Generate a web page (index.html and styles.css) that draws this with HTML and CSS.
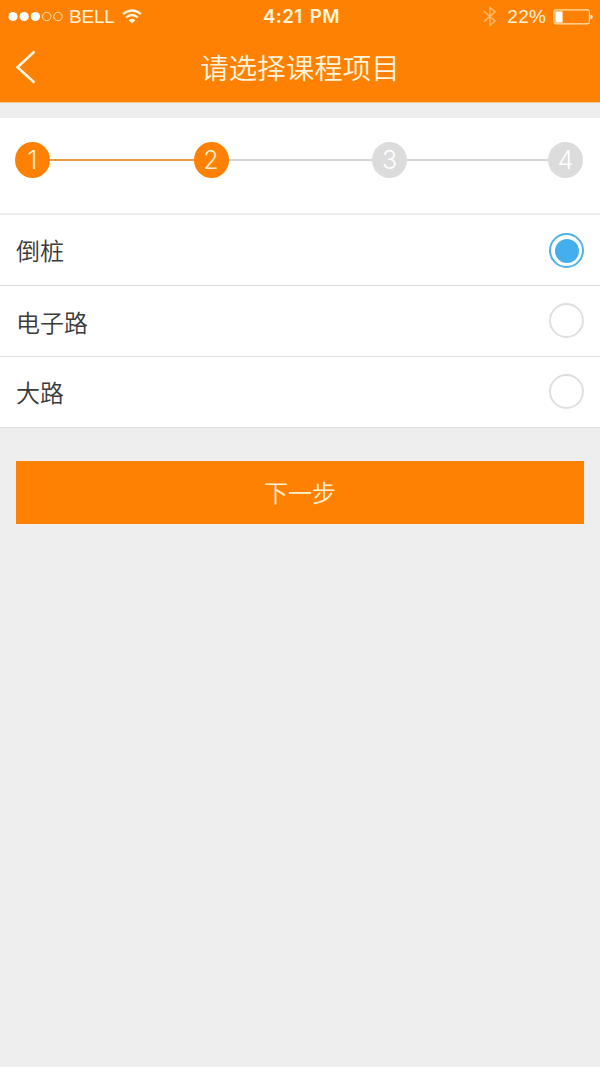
FILE: index.html
```html
<!DOCTYPE html>
<html lang="zh-CN">
<head>
<meta charset="utf-8">
<title>请选择课程项目</title>
<link rel="stylesheet" href="styles.css">
</head>
<body>
<header class="header">
  <div class="status">
    <div class="status-left">
      <svg class="signal" width="56" height="11" viewBox="0 0 56 11">
        <g fill="#fff"><circle cx="5" cy="5.5" r="4.6"/><circle cx="16.2" cy="5.5" r="4.6"/><circle cx="27.4" cy="5.5" r="4.6"/></g>
        <g fill="none" stroke="#ffe3b8"><circle cx="38.7" cy="5.5" r="4.2"/><circle cx="50" cy="5.5" r="4.2"/></g>
      </svg>
      <span class="carrier">BELL</span>
      <svg class="wifi" width="20" height="15" viewBox="0 0 20 15">
        <g fill="none" stroke="#fff5dc" stroke-width="2.2"><path d="M1 5.2Q10-2.2 19 5.2"/><path d="M4.1 8.5Q10 3.5 15.9 8.5"/></g>
        <path d="M6.7 11.2Q10 8.5 13.3 11.2L10 14.4Z" fill="#fff5dc"/>
      </svg>
    </div>
    <span class="time">4:21 PM</span>
    <div class="status-right">
      <svg class="bluetooth" width="14" height="21" viewBox="0 0 14 21" fill="none" stroke="#ffb866" stroke-width="1.5"><path d="M1 5.2L12 15L7 19.3V1.5L12 5.8L1 15.6"/></svg>
      <span class="percent">22%</span>
      <svg class="battery" width="40" height="16" viewBox="0 0 40 16">
        <rect x="1" y=".9" width="35.3" height="14" rx="1.8" fill="none" stroke="#ffe3b0" stroke-width="1.1"/>
        <rect x="2.4" y="2.4" width="7.2" height="11.2" fill="#fff"/>
        <path d="M37.4 5.6Q39.8 6 39.8 8T37.4 10.4Z" fill="#fff5dc"/>
      </svg>
    </div>
  </div>
  <nav class="navbar">
    <svg class="back" width="22" height="36" viewBox="0 0 22 36" fill="none" stroke="#fff8e6" stroke-width="2.5"><path d="M19.5 1.5L2.5 17.3L19.5 32.7"/></svg>
    <h1 class="title">请选择课程项目</h1>
  </nav>
</header>
<main>
  <section class="panel">
    <div class="steps">
      <span class="step active">1</span><i class="line active"></i>
      <span class="step active">2</span><i class="line"></i>
      <span class="step">3</span><i class="line"></i>
      <span class="step">4</span>
    </div>
    <ul class="options">
      <li class="option"><span class="label">倒桩</span><span class="radio checked"></span></li>
      <li class="option"><span class="label label-second">电子路</span><span class="radio"></span></li>
      <li class="option"><span class="label">大路</span><span class="radio"></span></li>
    </ul>
  </section>
  <button class="next" type="button">下一步</button>
</main>
</body>
</html>
```

FILE: styles.css
```css
* { box-sizing: border-box; }
body {
  margin: 0;
  min-height: 1067px;
  background: #eee;
  font-family: "Liberation Sans", "Noto Sans CJK SC", sans-serif;
  color: #3a3a3a;
}
.header {
  height: 103px;
  background: #ff8103;
  border-bottom: 1px solid #f7c894;
}
.status {
  display: grid;
  grid-template-columns: 1fr auto 1fr;
  height: 33px;
  padding: 0 8px;
  align-items: center;
  color: #fff3d8;
  font-size: 19px;
  line-height: 33px;
}
.status-left, .status-right { display: flex; align-items: center; }
.status-right { justify-content: flex-end; }
.carrier { margin-left: 5px; letter-spacing: -.2px; }
.wifi { margin-left: 7px; }
.time {
  padding-left: 3px;
  font: 600 18.8px/33px Inter, sans-serif;
  letter-spacing: .4px;
  word-spacing: 2px;
}
.percent { margin: 0 7px 0 10px; letter-spacing: .2px; }
.battery { margin-right: -1px; }
.navbar {
  display: grid;
  grid-template-columns: 22px 1fr 22px;
  height: 69px;
  padding: 0 15px;
  align-items: center;
}
.title {
  margin: 0;
  padding-bottom: 2px;
  text-align: center;
  font: 350 28.5px/40px "Noto Sans CJK SC DemiLight", "Noto Sans CJK SC", sans-serif;
  color: #fff5df;
}
.panel {
  margin-top: 15px;
  background: #fff;
  border-bottom: 1px solid #ddd;
}
.steps {
  display: grid;
  grid-template-columns: 35px 1fr 35px 1fr 35px 141px 35px;
  align-items: center;
  height: 97px;
  padding: 0 17px 12px 15px;
  border-bottom: 2px solid #eee;
}
.step {
  height: 36px;
  border-radius: 50%;
  background: #dcdcdc;
  color: #fff;
  text-align: center;
  font: 300 25px/37px Inter, sans-serif;
}
.line { height: 2px; background: #d5d5d5; }
.step.active { background: #ff8103; color: #fff2d8; }
.line.active { background: #e79a41; }
.options { margin: 0; padding: 0; list-style: none; }
.option {
  display: flex;
  justify-content: space-between;
  align-items: center;
  height: 71px;
  padding: 0 16px 1px;
  border-bottom: 1px solid #ddd;
}
.option:first-child { padding-bottom: 0; }
.option:last-child { height: 70px; border-bottom: 0; }
.label { font: 350 24px/36px "Noto Sans CJK SC DemiLight", "Noto Sans CJK SC", sans-serif; }
.label-second { padding-top: 3px; }
.radio {
  width: 35px;
  height: 35px;
  border: 2px solid #dfdfdf;
  border-radius: 50%;
}
.radio.checked {
  padding: 3.5px;
  border: 2px solid #50b2e6;
  background: #43afec content-box;
}
.next {
  display: block;
  width: 568px;
  height: 63px;
  margin: 33px auto 0;
  padding: 0 0 1px;
  border: 0;
  background: #ff8103;
  color: #fff0d0;
  font: 350 24px/62px "Noto Sans CJK SC DemiLight", "Noto Sans CJK SC", sans-serif;
}
```
